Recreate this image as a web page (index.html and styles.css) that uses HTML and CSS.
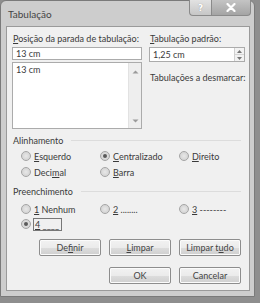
FILE: index.html
```html
<!DOCTYPE html>
<html lang="pt">
<head>
<meta charset="utf-8">
<link rel="stylesheet" href="styles.css">
</head>
<body>
<div class="window">
  <div class="titlebar">
    <span class="title">Tabulação</span>
    <div class="caption">
      <div class="cbtn help">?</div>
      <div class="cbtn close">
        <svg width="10" height="9" viewBox="0 0 10 9"><path d="M1.5 1 L8.5 8 M8.5 1 L1.5 8" stroke="#fff" stroke-width="2.2" stroke-linecap="round"/></svg>
      </div>
    </div>
  </div>
  <div class="client">
    <div class="top">
      <div class="col-left">
        <div class="lbl"><u>P</u>osição da parada de tabulação:</div>
        <div class="input">13 cm</div>
        <div class="list">
          <div class="list-items">13 cm</div>
          <div class="scroll">
            <svg width="7" height="4" viewBox="0 0 7 4"><path d="M0.5 3.5 L3.5 0.5 L6.5 3.5 Z" fill="#9a9a9a"/></svg>
            <svg width="7" height="4" viewBox="0 0 7 4"><path d="M0.5 0.5 L3.5 3.5 L6.5 0.5 Z" fill="#9a9a9a"/></svg>
          </div>
        </div>
      </div>
      <div class="col-right">
        <div class="lbl"><u>T</u>abulação padrão:</div>
        <div class="spin">
          <span class="spin-val">1,25 cm</span>
          <div class="spin-btns">
            <div class="sb"><svg width="5" height="3" viewBox="0 0 5 3"><path d="M0 3 L2.5 0 L5 3 Z" fill="#777"/></svg></div>
            <div class="sb"><svg width="5" height="3" viewBox="0 0 5 3"><path d="M0 0 L2.5 3 L5 0 Z" fill="#777"/></svg></div>
          </div>
        </div>
        <div class="lbl2">Tabulações a desmarcar:</div>
      </div>
    </div>

    <div class="group"><span class="group-title">Alinhamento</span><span class="rule"></span></div>
    <div class="radios">
      <label class="radio"><span class="dot"></span><span><u>E</u>squerdo</span></label>
      <label class="radio"><span class="dot on"></span><span><u>C</u>entralizado</span></label>
      <label class="radio"><span class="dot"></span><span><u>D</u>ireito</span></label>
      <label class="radio"><span class="dot"></span><span>Deci<u>m</u>al</span></label>
      <label class="radio"><span class="dot"></span><span><u>B</u>arra</span></label>
    </div>

    <div class="group g2"><span class="group-title">Preenchimento</span><span class="rule"></span></div>
    <div class="radios">
      <label class="radio"><span class="dot"></span><span><u>1</u> Nenhum</span></label>
      <label class="radio"><span class="dot"></span><span><u>2</u> ........</span></label>
      <label class="radio"><span class="dot"></span><span><u>3</u> --------</span></label>
      <label class="radio"><span class="dot on"></span><span class="focus"><u>4</u> ____</span></label>
    </div>

    <div class="btnrow r1">
      <button class="btn">De<u>f</u>inir</button>
      <button class="btn"><u>L</u>impar</button>
      <button class="btn">Limpar t<u>u</u>do</button>
    </div>
    <div class="btnrow r2">
      <button class="btn">OK</button>
      <button class="btn">Cancelar</button>
    </div>
  </div>
</div>
</body>
</html>
```
FILE: styles.css
```css
html, body {
  margin: 0;
  padding: 0;
}
body {
  width: 260px;
  height: 303px;
  background: #8e8e8e;
  font-family: Lato, "Open Sans", sans-serif;
  font-size: 9px;
  color: #3a3a3a;
  overflow: hidden;
  white-space: nowrap;
}
u { text-decoration: underline; text-underline-offset: 1px; }

.window {
  background: #cdcdcd;
  border: 1px solid #7a7a7a;
  border-radius: 6px 6px 0 0;
  display: flex;
  flex-direction: column;
  padding: 0 4px 5px 5px;
  box-sizing: border-box;
  width: 255px;
  height: 297px;
}
.titlebar {
  height: 25px;
  flex: none;
  display: flex;
  align-items: flex-start;
  justify-content: space-between;
}
.title {
  margin-top: 7px;
  margin-left: 2px;
  font-size: 10px;
  color: #444;
}
.caption {
  display: flex;
  margin-top: -1px;
  margin-right: -1px;
}
.cbtn {
  height: 16px;
  display: flex;
  align-items: center;
  justify-content: center;
  border: 1px solid #8a8a8a;
  border-top: none;
  box-sizing: border-box;
}
.help {
  width: 22px;
  border-radius: 0 0 0 4px;
  background: linear-gradient(#e2e2e2, #c6c6c6);
  color: #fff;
  font-family: "DejaVu Sans", sans-serif;
  font-size: 9px;
  font-weight: bold;
  text-shadow: 0 0 1px #888;
  border-right: none;
}
.close {
  width: 40px;
  border-radius: 0 0 4px 0;
  background: linear-gradient(#c4c4c4, #a4a4a4);
}

.client {
  flex: 1;
  background: #f0f0f0;
  border: 1px solid #9a9a9a;
  padding: 6px 8px 0 5px;
  display: flex;
  flex-direction: column;
}
.top {
  display: flex;
  gap: 7px;
}
.col-left { width: 130px; min-width: 0; flex: none; }
.col-right { flex: 1; min-width: 0; }
.lbl { height: 12px; line-height: 12px; padding-left: 1px; }
.input {
  margin-top: 2px;
  height: 13px;
  line-height: 12px;
  border: 1px solid #ababab;
  background: #fff;
  padding-left: 3px;
  box-sizing: border-box;
}
.list {
  margin-top: 2px;
  height: 67px;
  border: 1px solid #ababab;
  background: #fff;
  display: flex;
  box-sizing: border-box;
}
.list-items { flex: 1; padding: 2px 0 0 3px; line-height: 10px; }
.scroll {
  width: 12px;
  background: #eeeeee;
  border-left: 1px solid #e2e2e2;
  display: flex;
  flex-direction: column;
  justify-content: space-between;
  align-items: center;
  padding: 7px 0 5px;
}
.spin {
  margin-top: 2px;
  height: 15px;
  border: 1px solid #ababab;
  background: #fff;
  display: flex;
  box-sizing: border-box;
  width: 96px;
}
.spin-val { flex: 1; padding-left: 3px; line-height: 13px; }
.spin-btns { width: 9px; display: flex; flex-direction: column; border-left: 1px solid #d0d0d0; }
.sb { flex: 1; display: flex; align-items: center; justify-content: center; background: #f2f2f2; }
.sb + .sb { border-top: 1px solid #d6d6d6; }
.lbl2 { margin-top: 10px; padding-left: 1px; }

.group {
  display: flex;
  align-items: center;
  margin-top: 5px;
  height: 12px;
  padding-left: 1px;
}
.g2 { margin-top: 7px; }
.rule { flex: 1; height: 1px; background: #dcdcdc; margin-left: 8px; }
.radios {
  display: grid;
  grid-template-columns: 79px 79px 1fr;
  padding-left: 9px;
  row-gap: 4px;
  margin-top: 4px;
}
.g2 + .radios { margin-top: 6px; row-gap: 3px; }
.radio { display: flex; align-items: center; gap: 3px; height: 12px; }
.dot {
  width: 10px;
  height: 10px;
  border-radius: 50%;
  border: 1px solid #a4a4a4;
  box-sizing: border-box;
  background: radial-gradient(circle at 50% 50%, #e8e8e8 0, #d6d6d6 65%, #f4f4f4 100%);
  display: flex;
  align-items: center;
  justify-content: center;
}
.dot.on::after {
  content: "";
  width: 4px;
  height: 4px;
  border-radius: 50%;
  background: #5a5a5a;
}
.focus { outline: 1px solid #777; outline-offset: 0; padding: 0 2px 0 1px; }

.btnrow {
  display: flex;
  justify-content: flex-end;
  gap: 8px;
}
.r1 { margin-top: 9px; }
.r2 { margin-top: 11px; }
.btn {
  width: 62px;
  height: 17px;
  font-family: inherit;
  font-size: 9px;
  color: #444;
  border: 1px solid #8d8d8d;
  border-radius: 2px;
  background: linear-gradient(#f2f2f2 0%, #ebebeb 50%, #dddddd 51%, #cfcfcf 100%);
  padding: 0;
  box-shadow: inset 0 0 0 1px #fbfbfb;
}
```
